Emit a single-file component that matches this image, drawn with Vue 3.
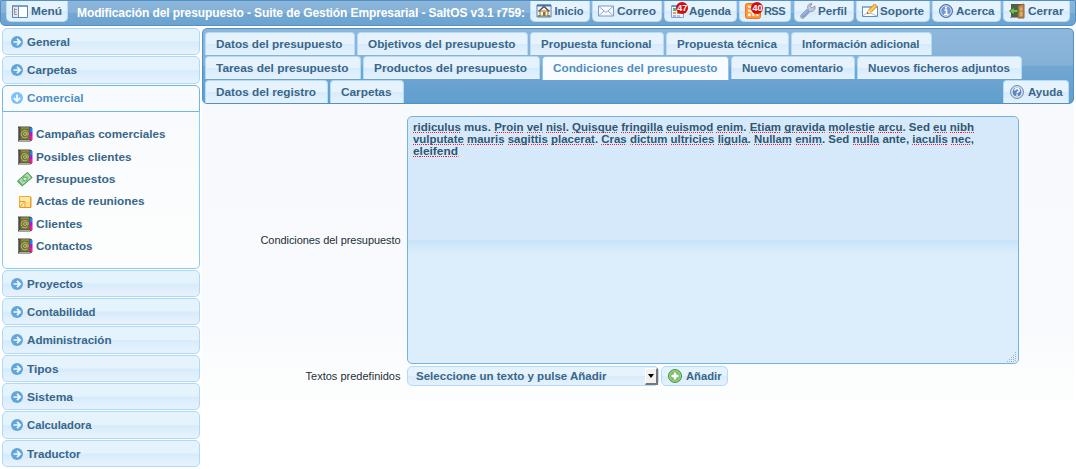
<script setup>
// Stretches a label horizontally to its designed width.
const vFit = {
  mounted(el, { value }) {
    const natural = el.getBoundingClientRect().width
    const ratio = value / natural
    if (ratio > 1.015) {
      el.style.transform = `scaleX(${ratio})`
    } else {
      el.style.letterSpacing = (value - natural) / el.textContent.trim().length + 'px'
    }
  }
}

const book = '<path d="M1 .5h12l2 1v13l-2 1H1z" fill="#4d4b48"/><path d="M3.500 1.500h9v12h-9z" fill="#77762c"/><path d="M4 2h8" stroke="#9c9a4d"/><path d="M1.500 2v12" stroke="#777"/><path d="M13 2h2.500v4H13z" fill="#1488f0"/><path d="M13 6h2.500v4H13z" fill="#b010ee"/><path d="M13 10h2.500v4H13z" fill="#ff1295"/><path d="M10.300 10.800a3.600 3.600 0 1 1 1-3.300c.2 2-1.700 2.300-1.700.7V6.500M9.500 8a1.500 1.500 0 1 1-3 0 1.500 1.500 0 0 1 3 0" fill="none" stroke="#c9c793" stroke-width=".8"/><path d="M2 14.500h11" stroke="#aaa"/>'
const icons = {
  menu: '<path d="M.5 2.500h15v12H.5z" fill="#fff" stroke="#5e83bd"/><path d="M1 3h14" stroke="#7c9fd0" stroke-width="2"/><path d="M1 4h5v10H1z" fill="#e9e9e9"/><path d="M6.500 4v10" stroke="#6a8fc6"/><path d="M2.500 5v7M2.500 6.500h2.500M2.500 9h2M2.500 11.500h2.500" stroke="#999" fill="none"/>',
  home: '<path d="M1 2h14v12H1z" fill="#f4f7fb" stroke="#5580bd"/><path d="M1 2.500h14" stroke="#4474b8" stroke-width="2"/><path d="M4 8h8v5H4z" fill="#fff1cf" stroke="#8b7150"/><path d="M2.500 8.500 8 3.500l5.500 5" fill="none" stroke="#72533b" stroke-width="1.600"/><path d="M7 9h2.500v4H7z" fill="#956e40"/><path d="M2 13h3M11 13h3" stroke="#66a342" stroke-width="2"/>',
  mail: '<path d="M.5 3h15v10H.5z" fill="#f7fbff" stroke="#769bd0"/><path d="m1 3.500 7 6 7-6M1 12.500l5-4.500m9 4.500-5-4.500" fill="none" stroke="#8fa9cd"/>',
  agenda: '<path d="M1.500 2.500h12v12h-12z" fill="#eef3fd" stroke="#86a0db"/><path d="M2 3h11" stroke="#7193db" stroke-width="2"/><path d="M3 5h3v3H3z" fill="#67b353"/><path d="M7 6h3v2H7zM7 12h3v2H7z" fill="#b7c4dc"/><path d="M3 9h3v2H3z" fill="#ef9568"/><path d="M7 9h3v2H7z" fill="#71bd58"/><path d="M11 9h2v2h-2z" fill="#edbb50"/><path d="M3 12h3v2H3z" fill="#9eb8df"/>',
  rss: '<rect x=".5" y=".5" width="15" height="15" rx="2" fill="#ff983a" stroke="#ed7618"/><path d="M3 3.500a9.500 9.500 0 0 1 9.500 9.500M3 7.500A5.500 5.500 0 0 1 8.500 13" stroke="#fff4df" stroke-width="1.800" fill="none"/><circle cx="4.300" cy="11.700" r="1.500" fill="#fff"/>',
  wrench: '<path d="M14.700 3 12 5.200 10.300 3.500 12 .7C9.500.2 7 2.500 7.800 5.500L1.300 12c-2 2 .8 4.700 2.800 2.700l6.300-6.500C13.800 9 16 6 14.700 3z" fill="#c5cce0" stroke="#8b91a6"/><path d="m3 13 5-5" stroke="#7296df" stroke-width="2.800" stroke-linecap="round"/><path d="m3 12.500 5-5" stroke="#bed1ff"/>',
  support: '<path d="M.5 3.500h15v10H.5z" fill="#fff" stroke="#5d8cc9"/><path d="M1 4h14" stroke="#8cb1df" stroke-width="2"/><path d="m1 13 5-4 9 4" stroke="#a8bed7" fill="none"/><path d="m5 11 1.500-4 6-6 2.500 2.500-6 6z" fill="#ffc83e" stroke="#be8a32"/><path d="m5 11 1.500-4 2.500 2.500z" fill="#fce5bc"/><path d="m12 1.500 1-1L15.500 3l-1 1z" fill="#e99d91"/><path d="m5 11 1.700-.7-1-1z" fill="#43454c"/>',
  info: '<circle cx="8" cy="8" r="6.500" fill="#5580bd" stroke="#4773b2"/><circle cx="8" cy="8" r="5.300" fill="#7599ca" stroke="#e0ebf9"/><path d="M6.500 7h2v4M6 11.500h4.500" stroke="#fff" stroke-width="1.600" fill="none"/><circle cx="8" cy="4.700" r="1.100" fill="#fff"/>',
  close: '<path d="M2 1h12v13H2z" fill="#555b50"/><path d="m9 2.500 6-1.500v14H9z" fill="#bb884e" stroke="#92632f"/><path d="M11 4.500h2.500v3H11zM11 9h2.500v4H11z" fill="#d9ae70"/><path d="m.5 8 4.500-4v2.500h4v3H5V12z" fill="#78bd50" stroke="#327a2c"/><path d="M1 14.500h8" stroke="#999"/>',
  help: '<circle cx="8" cy="8" r="6.500" fill="#b9cce4" stroke="#6c91c2"/><circle cx="8" cy="8" r="5" fill="#5c86be" stroke="#eef5fd"/><path d="M5.800 6.500c0-2.700 4.600-2.400 4.400.1C10 8 8 7.900 8 9.300" fill="none" stroke="#fff" stroke-width="1.500"/><path d="M7.200 10.300h1.600v1.500H7.200z" fill="#fff"/>',
  add: '<circle cx="8" cy="8" r="6.500" fill="#77b962" stroke="#3e9142"/><circle cx="8" cy="8" r="5.400" fill="none" stroke="#b3dda4" stroke-width=".8"/><path d="M8 4.500v7M4.500 8h7" stroke="#fff" stroke-width="2.600"/>',
  book,
  money: '<path d="M0 10.500 10.500 1 15.500 6.500 5 15.500z" fill="#65a169"/><path d="m1 9.500 9.500-8 4.500 5-9.500 8z" fill="#98d299" stroke="#559e61"/><path d="m3 9.700 7.200-6 2.700 2.900-7 6z" fill="none" stroke="#c4edc2" stroke-width=".8"/><ellipse cx="8" cy="8" rx="2.200" ry="2" fill="#c9efc5" stroke="#5ba465"/>',
  note: '<path d="M2.500 3.500h11v11h-11z" fill="#fce486" stroke="#f4a43b"/><path d="M3 4h10v5H3z" fill="#ffed9d"/><path d="M3 8.500h5v5.500" fill="#fff8d3" stroke="#e89131"/><path d="m3 14 4.500-5.500" stroke="#eda13e"/><path d="M14 4v10.500H3" stroke="#e9942f" fill="none"/>',
  right: '<circle cx="6" cy="6" r="6" fill="#61a6da"/><path d="M2.500 6h6M6 2.800 9.200 6 6 9.200" fill="none" stroke="#f3faff" stroke-width="1.700"/>',
  down: '<circle cx="6" cy="6" r="6" fill="#7cc2f7"/><path d="M6 2.500v6M2.800 5.800 6 9l3.200-3.200" fill="none" stroke="#fff" stroke-width="1.700"/>'
}

const tools = [
  { t: 'Inicio', i: 'home', w: 60, f: 29 },
  { t: 'Correo', i: 'mail', w: 70, f: 39 },
  { t: 'Agenda', i: 'agenda', w: 73, f: 42, n: 47 },
  { t: 'RSS', i: 'rss', w: 52, f: 21, n: 40 },
  { t: 'Perfil', i: 'wrench', w: 60, f: 29 },
  { t: 'Soporte', i: 'support', w: 74, f: 44 },
  { t: 'Acerca', i: 'info', w: 69, f: 38.500 },
  { t: 'Cerrar', i: 'close', w: 67, f: 35.500 }
]
const tabRows = [
  [['Datos del presupuesto', 150, 126.500], ['Objetivos del presupuesto', 171, 147.500], ['Propuesta funcional', 134, 110.500], ['Propuesta técnica', 123, 100], ['Información adicional', 141, 117.500]],
  [['Tareas del presupuesto', 156, 132.500], ['Productos del presupuesto', 177, 153], ['Condiciones del presupuesto', 187, 164.500, true], ['Nuevo comentario', 124, 101], ['Nuevos ficheros adjuntos', 165, 142]],
  [['Datos del registro', 123, 100], ['Carpetas', 74, 50.500]]
]
const sections = [
  { t: 'General', h: 27, f: 43 },
  { t: 'Carpetas', h: 28, f: 50 },
  { t: 'Comercial', h: 27, f: 56.500, open: true },
  { t: 'Proyectos', h: 27, f: 56 },
  { t: 'Contabilidad', h: 27, f: 68.500 },
  { t: 'Administración', h: 28, f: 84.500 },
  { t: 'Tipos', h: 27, f: 31.500 },
  { t: 'Sistema', h: 27, f: 46 },
  { t: 'Calculadora', h: 28, f: 64.500 },
  { t: 'Traductor', h: 27, f: 53.500 }
]
const links = [
  ['Campañas comerciales', 'book', 129.500], ['Posibles clientes', 'book', 95.500], ['Presupuestos', 'money', 79.500],
  ['Actas de reuniones', 'note', 108.500], ['Clientes', 'book', 46.500], ['Contactos', 'book', 56.500]
]
// Words prefixed with "~" carry the spell-check underline.
const lines = [
  ['~ridiculus mus. ~Proin ~vel ~nisl. ~Quisque ~fringilla ~euismod ~enim. ~Etiam ~gravida ~molestie ~arcu. Sed ~eu ~nibh', 561],
  ['~vulputate ~mauris ~sagittis ~placerat. ~Cras ~dictum ~ultricies ~ligula. ~Nullam ~enim. Sed ~nulla ante, ~iaculis ~nec,', 561],
  ['~eleifend', 45]
].map(([s, w]) => ({
  w,
  words: s.split(' ').map((x, k) => {
    const m = x.match(/^(~?)(.*?)([.,]?)$/)
    return { bad: !!m[1], core: m[2], tail: m[3], lead: k ? ' ' : '' }
  })
}))
</script>

<template>
  <div class="page">
    <header class="bar">
      <button class="tool menu"><svg class="ico" viewBox="0 0 16 16" v-html="icons.menu" /><span v-fit="31">Menú</span></button>
      <div class="title"><span v-fit="448">Modificación del presupuesto - Suite de Gestión Empresarial - SaltOS v3.1 r759:</span></div>
      <nav class="tools">
        <button v-for="b in tools" :key="b.t" class="tool" :style="{ width: b.w + 'px' }">
          <svg class="ico" viewBox="0 0 16 16" v-html="icons[b.i]" />
          <span v-fit="b.f">{{ b.t }}</span>
          <b v-if="b.n" class="badge">{{ b.n }}</b>
        </button>
      </nav>
    </header>
    <div class="cols">
      <aside>
        <template v-for="s in sections" :key="s.t">
          <div class="head" :class="{ open: s.open }" :style="{ height: s.h + 'px' }">
            <svg class="arrow" viewBox="0 0 12 12" v-html="s.open ? icons.down : icons.right" />
            <span v-fit="s.f">{{ s.t }}</span>
          </div>
          <ul v-if="s.open" class="links">
            <li v-for="l in links" :key="l[0]">
              <svg class="ico" viewBox="0 0 16 16" v-html="icons[l[1]]" /><span v-fit="l[2]">{{ l[0] }}</span>
            </li>
          </ul>
        </template>
      </aside>
      <main>
        <div class="tabs">
          <div v-for="(r, k) in tabRows" :key="k" class="row">
            <div v-for="t in r" :key="t[0]" class="tab" :class="{ on: t[3] }" :style="{ width: t[1] + 'px' }"><span v-fit="t[2]">{{ t[0] }}</span></div>
            <div v-if="k === 2" class="tab help"><svg class="ico" viewBox="0 0 16 16" v-html="icons.help" /><span v-fit="34.500">Ayuda</span></div>
          </div>
        </div>
        <div class="form">
          <label><span v-fit="140">Condiciones del presupuesto</span></label>
          <div class="area">
            <div v-for="(l, k) in lines" :key="k" class="line"><span v-fit="l.w" class="run"><template v-for="(w, j) in l.words" :key="j">{{ w.lead }}<span :class="{ bad: w.bad }">{{ w.core }}</span>{{ w.tail }}</template></span></div>
            <svg class="grip" viewBox="0 0 10 10"><path d="M8.500 0v10M6.500 3v7M4.500 5v5M2.500 7v3M.5 9v1" stroke="#9db1bf" stroke-dasharray="1 1" /></svg>
          </div>
          <label><span v-fit="95">Textos predefinidos</span></label>
          <div class="controls">
            <div class="select"><span v-fit="190.500">Seleccione un texto y pulse Añadir</span><i class="drop"><svg viewBox="0 0 6 4"><path d="M0 0h6L3 4z" /></svg></i></div>
            <button class="add"><svg class="ico" viewBox="0 0 16 16" v-html="icons.add" /><span v-fit="35.500">Añadir</span></button>
          </div>
        </div>
      </main>
    </div>
  </div>
</template>

<style>
html, body { background: #fff; overflow: hidden; }
</style>
<style scoped>
.page { width: 1076px; height: 469px; overflow: hidden; font: bold 11px/14px "Liberation Sans", Arial, sans-serif; color: #386689; }
.page * { box-sizing: border-box; }
span { white-space: pre; transform-origin: 0 50%; }
button { font: inherit; color: inherit; margin: 0; }
.ico { width: 16px; height: 16px; flex: none; display: block; }
.bar { height: 26px; display: flex; align-items: flex-start; padding: 1px 5px 0; border: 1px solid #5291c3; border-radius: 0 0 5px 5px; background: linear-gradient(#8bb5da 0, #86b1d6 50%, #73a7d2 51%, #6ca3d0 100%); }
.tool { height: 20px; display: flex; align-items: center; gap: 2.500px; padding: 0 0 0 5px; border: 1px solid #b9def9; border-top: 0; border-radius: 0 0 5px 5px; background: linear-gradient(#e6f3fd 0 48%, #d8ebfb 52%, #e5f2fd); position: relative; flex: none; }
.bar .tool { height: 21px; margin-top: -1px; }
.menu { width: 62px; }
.title { width: 450px; margin-left: 9px; height: 22px; line-height: 22px; font-size: 12px; color: #fff; white-space: nowrap; }
.tools { display: flex; gap: 2.150px; margin-left: auto; }
.badge { position: absolute; left: 11px; top: 1px; width: 12px; height: 12px; border-radius: 6px; background: #d30b12; color: #fff; font: bold 9px/12px "Liberation Sans", Arial, sans-serif; text-align: center; }
.cols { display: flex; align-items: flex-start; padding: 2px 2px 0; gap: 2px; }
aside { width: 198px; display: flex; flex-direction: column; gap: 1px; }
.head { flex: none; display: flex; align-items: center; gap: 3.500px; padding-left: 8px; border: 1px solid #afd9fa; border-radius: 5px; background: linear-gradient(#e5f3fd 0 48%, #d8ebfb 52%, #e7f3fd); }
.head.open { color: #4e8ebf; border-color: #76b5e3; border-radius: 5px 5px 0 0; background: #f8fbfe; padding-bottom: 2px; }
.arrow { width: 12px; height: 12px; flex: none; }
.links { list-style: none; margin: -2px 0 0; height: 158px; padding: 11px 0 0 14px; border: 1px solid #8acafb; border-top-color: #76b5e3; border-radius: 0 0 5px 5px; background: linear-gradient(#f8fafd 0, #fcfdfd 75%); }
.links li { display: flex; align-items: center; gap: 2.500px; height: 22.400px; }
main { width: 872px; height: 371px; background: linear-gradient(#f7f9fc 0 15%, #f8fafd 82%, #fcfdfd 94%); }
.tabs { height: 76px; padding: 3px 4px 0 2px; border: 1px solid #5291c3; border-radius: 5px; background: linear-gradient(#8eb7dc 0, #86b1d6 49%, #72a7d1 50%, #609fce 100%); }
.row { height: 24px; display: flex; gap: 2px; align-items: flex-start; }
.tab { height: 23px; display: flex; align-items: center; padding: 0 0 0 10px; border: 1px solid #b3dcfa; border-bottom: 0; border-radius: 4px 4px 0 0; background: linear-gradient(#e6f3fd 0 48%, #d8ebfb 52%, #e5f2fd); }
.tab.on { height: 24px; background: #f8fbff; border-color: #91c6ee; color: #4e8ebf; padding-bottom: 1px; padding-left: 9.500px; }
.help { margin-left: auto; width: 66px; padding-left: 5px; gap: 2.500px; }
.form { display: grid; grid-template-columns: 198.500px 612px; grid-template-rows: 248px 20px; column-gap: 6.500px; row-gap: 2px; padding-top: 12px; align-items: center; }
label { text-align: right; font-weight: normal; color: #222f38; }
label span { display: inline-block; transform-origin: 100% 50%; }
.area { height: 248px; border: 1px solid #75b3df; border-radius: 5px; padding: 4px 4.500px; background: linear-gradient(#d5e9fb 0 50%, #c8e4fa 50%, #dceefb 56%, #dceefb); position: relative; color: #315670; }
.line { height: 12px; line-height: 12px; }
.run { display: inline-block; }
.bad { background: repeating-linear-gradient(90deg, #e22330 0 1px, transparent 1px 2px) 0 100% / 100% 1px no-repeat; }
.grip { position: absolute; right: 1px; bottom: 1px; width: 10px; height: 10px; }
.controls { display: flex; gap: 2.500px; height: 20px; }
.select, .add { height: 20px; display: flex; align-items: center; border: 1px solid #b3dafa; border-radius: 5px; background: linear-gradient(#e6f3fd 0 48%, #d8ebfb 52%, #e5f2fd); }
.select { width: 251.500px; padding-left: 8px; justify-content: space-between; }
.drop { width: 13px; height: 17px; display: grid; place-items: center; background: #f1f1f0; border: 1px solid #fff; border-right: 2px solid #777; border-bottom: 2px solid #777; }
.drop svg { width: 6px; height: 4px; display: block; }
.add { width: 67px; padding: 0 0 0 5px; gap: 2.500px; }
</style>
